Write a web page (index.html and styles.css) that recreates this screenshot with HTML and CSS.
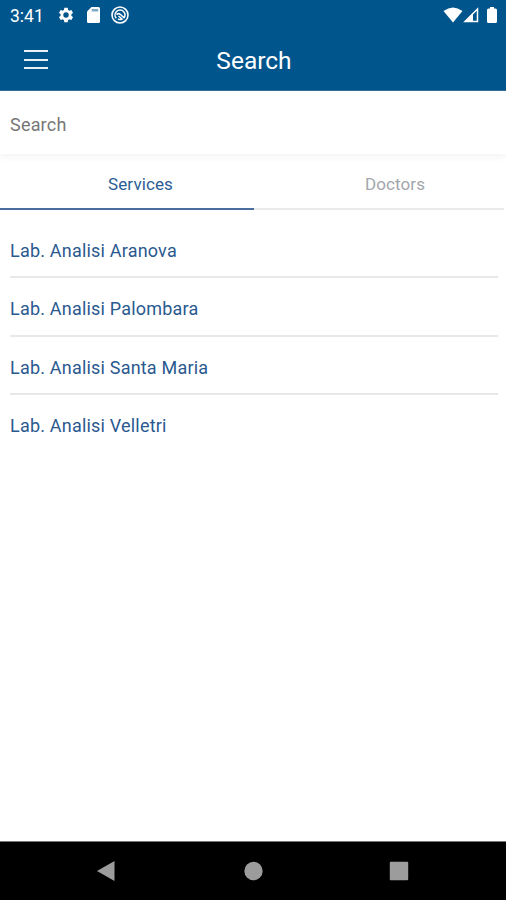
FILE: index.html
```
<!DOCTYPE html>
<html lang="en">
<head>
  <meta charset="UTF-8">
  <meta name="viewport" content="width=device-width, initial-scale=1.0">
  <title>Search</title>
  <link rel="stylesheet" href="styles.css">
</head>
<body>
  <!-- Status bar -->
  <div class="status-bar">
    <span class="time">3:41</span>
    <svg class="gear" width="18" height="18" viewBox="0 0 24 24" fill="#fff"><path d="M19.14 12.94a7.5 7.5 0 0 0 0-1.88l2.03-1.58a.5.5 0 0 0 .12-.61l-1.92-3.32a.49.49 0 0 0-.59-.22l-2.39.96a7 7 0 0 0-1.62-.94l-.36-2.54a.48.48 0 0 0-.48-.41h-3.84a.48.48 0 0 0-.47.41l-.36 2.54a7.3 7.3 0 0 0-1.62.94l-2.39-.96a.48.48 0 0 0-.59.22L2.74 8.87a.48.48 0 0 0 .12.61l2.03 1.58a7.5 7.5 0 0 0 0 1.88l-2.03 1.58a.5.5 0 0 0-.12.61l1.92 3.32c.12.22.37.29.59.22l2.39-.96c.5.38 1.03.7 1.62.94l.36 2.54c.05.24.24.41.48.41h3.84c.24 0 .44-.17.47-.41l.36-2.54a7 7 0 0 0 1.62-.94l2.39.96c.22.08.47 0 .59-.22l1.92-3.32a.48.48 0 0 0-.12-.61zM12 15.6a3.6 3.6 0 1 1 0-7.2 3.6 3.6 0 0 1 0 7.2z"/></svg>
    <svg class="card" width="13" height="16" viewBox="0 0 13 16"><path fill="#fff" d="M4.5 0h7Q13 0 13 1.500v13q0 1.500-1.500 1.500h-10Q0 16 0 14.500V4.500z"/><path stroke="#00558c" stroke-opacity=".5" stroke-width="6.500" d="M8 2v2.500"/></svg>
    <svg class="sync" width="18" height="18" viewBox="0 0 18 18" fill="none" stroke="#fff"><circle cx="9" cy="9" r="8" stroke-width="1.600"/><path stroke-width="1.500" d="M5.300 12.300a5 5 0 0 1 .2-6.800 5 5 0 0 1 7.200.2 5 5 0 0 1 .3 6.100M5.500 8.500q2-1.800 4 0l4 3.800M7 12.800q2 1.300 4 .2L7.500 10"/></svg>
    <div class="signals">
      <svg width="20" height="16" viewBox="0 0 20 16"><path fill="#fff" d="M.5 4Q10-3 19.500 4L10 15.500z"/></svg>
      <svg width="16" height="16" viewBox="0 0 16 16"><path fill="none" stroke="#fff" stroke-width="1.500" d="M14.500 2v12.500H2z"/><path fill="#fff" d="M10 6v8.500H2z"/></svg>
      <svg class="battery" width="10" height="16" viewBox="0 0 10 16"><path fill="#fff" d="M3 0h4v1.500h1.500Q10 1.500 10 3v11.500Q10 16 8.500 16h-7Q0 16 0 14.500V3Q0 1.500 1.500 1.500H3z"/></svg>
    </div>
  </div>

  <!-- Header -->
  <div class="header">
    <div class="menu">
      <span></span>
      <span></span>
      <span></span>
    </div>
    <h1>Search</h1>
  </div>

  <div class="search-box">
    <input type="text" placeholder="Search">
  </div>

  <!-- Tabs -->
  <div class="tabs">
    <button class="tab active">Services</button>
    <button class="tab">Doctors</button>
  </div>

  <ul class="list">
    <li>Lab. Analisi Aranova</li>
    <li>Lab. Analisi Palombara</li>
    <li>Lab. Analisi Santa Maria</li>
    <li>Lab. Analisi Velletri</li>
  </ul>

  <!-- Android navigation -->
  <div class="nav-bar">
    <svg width="20" height="22" viewBox="0 0 20 22"><path fill="#9c9c9c" d="M1 11L18.500 1v20z"/></svg>
    <svg width="20" height="20" viewBox="0 0 20 20"><circle cx="10.500" cy="10" r="9.200" fill="#9c9c9c"/></svg>
    <svg width="20" height="20" viewBox="0 0 20 20"><rect x=".8" y=".8" width="18.400" height="18.400" rx="1" fill="#9c9c9c"/></svg>
  </div>
</body>
</html>
```

FILE: styles.css
```
* {
  box-sizing: border-box;
}
body {
  margin: 0;
  height: 900px;
  display: flex;
  flex-direction: column;
  overflow: hidden;
  background-color: #fff;
  font-family: Roboto, "Liberation Sans", sans-serif;
}
.status-bar {
  height: 31px;
  padding: 0 9px 1px 10px;
  display: flex;
  align-items: center;
  background-color: #00558c;
  color: #fff;
}
.time {
  width: 47px;
  padding-top: 1px;
  font-size: 17.5px;
  line-height: 30px;
}
.card {
  margin: 0 11px 0 12px;
}
.signals {
  margin-left: auto;
  display: flex;
}
.battery {
  margin-left: 8px;
}
.header {
  height: 60px;
  padding: 0 23px 0 24px;
  display: grid;
  grid-template-columns: 60px 1fr 60px;
  align-items: center;
  background-color: #00558c;
  border-bottom: 1px solid #336f9e;
  color: #fff;
}
.header h1 {
  margin: 0;
  padding-left: 1px;
  font-size: 24.5px;
  font-weight: 400;
  line-height: 30px;
  text-align: center;
}
.menu {
  width: 24px;
  height: 19px;
  margin-bottom: 2px;
  display: flex;
  flex-direction: column;
  justify-content: space-between;
}
.menu span {
  height: 2px;
  background-color: #e8f1f8;
}
.search-box {
  height: 63px;
  padding: 0 10px;
  display: flex;
  box-shadow: 0 2px 8px rgba(0, 0, 0, 0.06);
}
.search-box input {
  flex: 1;
  min-width: 0;
  padding: 4px 0 0;
  border: 0;
  outline: none;
  background: none;
  font-family: inherit;
  font-size: 18px;
  letter-spacing: 0.2px;
}
.search-box input::placeholder {
  color: #777;
}
.tabs {
  height: 56px;
  margin-right: 2px;
  display: flex;
}
.tab {
  flex: 1;
  padding: 5px 0 0 32px;
  border: 0;
  border-bottom: 2px solid #e9eaeb;
  background: none;
  color: #a3a6ac;
  font-family: inherit;
  font-size: 17px;
  letter-spacing: 0.1px;
}
.tab.active {
  padding-left: 27px;
  flex: 0 0 254px;
  border-bottom-color: #4a6f9e;
  color: #2c5c94;
}
.list {
  flex: 1;
  margin: 0;
  padding: 10px 8px 0 10px;
  list-style: none;
}
.list li {
  height: 58.3px;
  padding-top: 6px;
  border-bottom: 2px solid #e8e8e8;
  color: #2a598f;
  font-size: 18px;
  line-height: 49px;
  letter-spacing: 0.2px;
}
.list li:last-child {
  border-bottom: 0;
}
.nav-bar {
  height: 59px;
  padding: 0 97px 0 96px;
  display: flex;
  align-items: center;
  justify-content: space-between;
  background-color: #000;
  border-top: 1px solid #777;
}
```
